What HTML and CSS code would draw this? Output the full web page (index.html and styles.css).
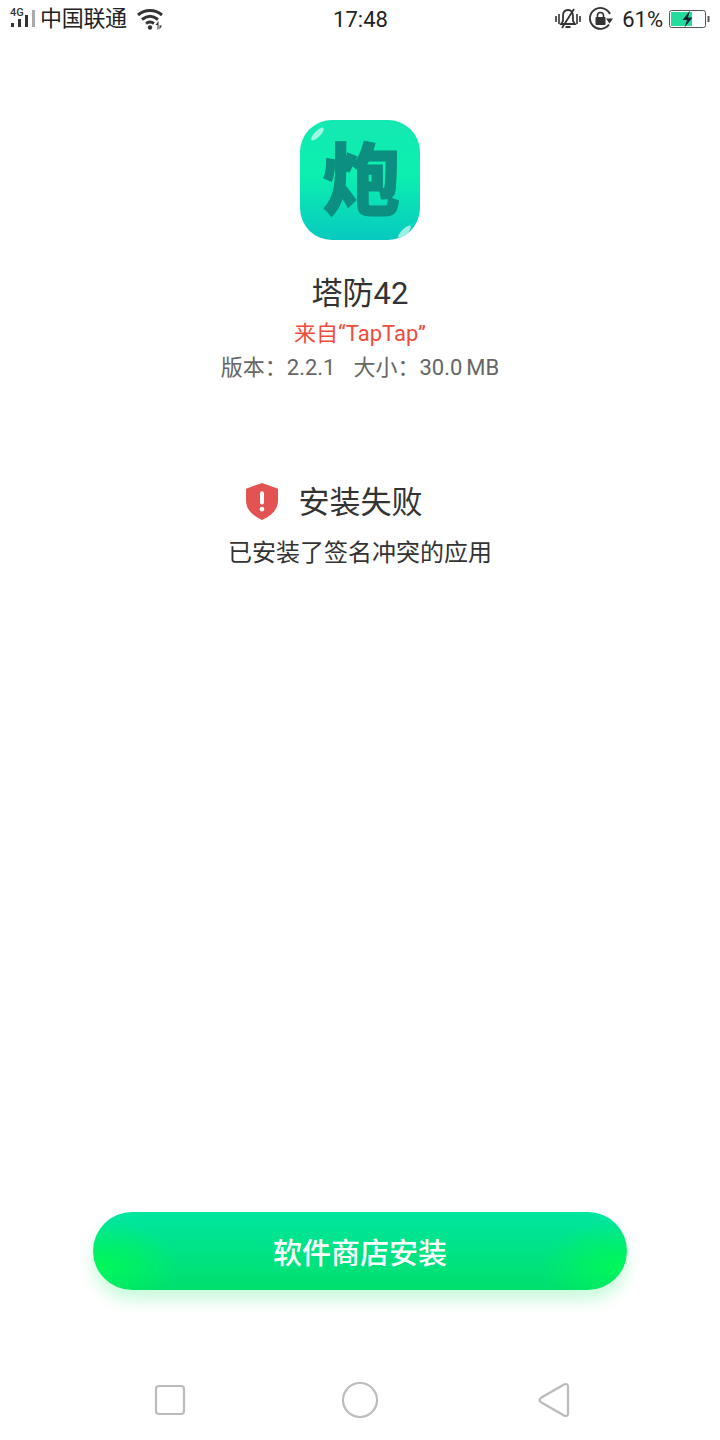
FILE: index.html
```html
<!doctype html>
<html lang="zh-CN">
<head>
  <meta charset="UTF-8">
  <title>安装失败</title>
  <link rel="stylesheet" href="styles.css">
</head>
<body>
  <div class="page">
    <header class="statusbar">
      <div class="status-left">
        <span class="signal">
          <span class="net">4G</span>
          <svg width="28" height="18" viewBox="0 0 28 18">
            <rect x="1" y="13" width="3" height="4" fill="#333"/>
            <rect x="8" y="9" width="3" height="8" fill="#333"/>
            <rect x="15" y="5" width="3" height="12" fill="#333"/>
            <rect x="22" y="0" width="3" height="17" fill="#aaa"/>
          </svg>
        </span>
        <span class="carrier">中国联通</span>
        <svg class="wifi" width="30" height="22" viewBox="0 0 30 22">
          <path d="M2 7C9 1 19 1 26 7" fill="none" stroke="#333" stroke-width="3"/>
          <path d="M6 11.500C11 7.500 17 7.500 22 11.500" fill="none" stroke="#333" stroke-width="3"/>
          <path d="M10 15.500C12.600 13.600 15.400 13.600 18 15.500" fill="none" stroke="#333" stroke-width="2.800"/>
          <circle cx="14" cy="19.500" r="2.200" fill="#333"/>
          <path d="M21.500 21.500v-4.500h-2l3-4v8.500zM23.500 13v4.500h2.500l-2.500 4z" fill="#333"/>
        </svg>
      </div>
      <div class="clock">17:48</div>
      <div class="status-right">
        <svg class="mute" width="26" height="24" viewBox="0 0 26 24">
          <path d="M13 3c-3.500 0-5 2.500-5 6v5l-2 3h14l-2-3V9c0-3.500-1.500-6-5-6z" fill="none" stroke="#333" stroke-width="1.800"/>
          <path d="M10.500 20h5M19 2L7 21" fill="none" stroke="#333" stroke-width="1.800"/>
          <path d="M1 9v6M4 7v10M22 7v10M25 9v6" fill="none" stroke="#333" stroke-width="1.600"/>
        </svg>
        <svg class="rotate" width="26" height="26" viewBox="0 0 26 26">
          <path d="M21 18.500A10.500 10.500 0 1 1 22 8" fill="none" stroke="#333" stroke-width="1.800"/>
          <path d="M18 12.500h7l-3.500 5z" fill="#333"/>
          <rect x="7.500" y="11" width="10" height="8" rx="1" fill="#333"/>
          <path d="M9.500 11V9.500a3 3 0 0 1 6 0V11" fill="none" stroke="#333" stroke-width="1.600"/>
        </svg>
        <span class="percent">61%</span>
        <svg class="battery" width="41" height="18" viewBox="0 0 41 18">
          <rect x=".5" y=".5" width="36" height="17" rx="2" fill="#fff" stroke="#555"/>
          <rect x="2" y="2" width="21" height="14" fill="#22dd9c"/>
          <path d="M21 0.500l-7.500 9.500h4.500l-2.500 7.500 8-10h-4.500z" fill="#123"/>
          <rect x="38.500" y="6" width="2" height="6" fill="#555"/>
        </svg>
      </div>
    </header>

    <main class="content">
      <div class="app-icon">
        <span class="app-glyph">炮</span>
        <span class="shine shine-top"></span>
        <span class="shine shine-bottom"></span>
      </div>
      <h1 class="app-name">塔防42</h1>
      <p class="app-source">来自“TapTap”</p>
      <p class="app-meta"><span>版本：2.2.1</span><span>大小：30.0 MB</span></p>

      <div class="result">
        <svg class="shield" width="34" height="37" viewBox="0 0 34 36" preserveAspectRatio="none">
          <path d="M17 0L33 5.500V17C33 26 26 32 17 36C8 32 1 26 1 17V5.500z" fill="#e25352"/>
          <rect x="15" y="8" width="4" height="13" rx="2" fill="#fff"/>
          <circle cx="17" cy="25.500" r="2.300" fill="#fff"/>
        </svg>
        <span class="result-title">安装失败</span>
      </div>
      <p class="result-reason">已安装了签名冲突的应用</p>
    </main>

    <div class="action">
      <button class="store-btn" type="button">软件商店安装</button>
    </div>

    <nav class="navbar">
      <svg width="32" height="32" viewBox="0 0 32 32">
        <rect x="2" y="2" width="28" height="28" rx="3" fill="none" stroke="#bbb" stroke-width="2.200"/>
      </svg>
      <svg class="nav-home" width="38" height="38" viewBox="0 0 38 38">
        <circle cx="19" cy="19" r="17" fill="none" stroke="#bbb" stroke-width="2.200"/>
      </svg>
      <svg width="34" height="36" viewBox="0 0 34 36">
        <path d="M2.500 18c0-1 .5-1.500 1.500-2.200L27 2.500c2-1 4-.5 4 2v27c0 2.500-2 3-4 2L4 20.200c-1-.7-1.500-1.200-1.500-2.200z" fill="none" stroke="#bbb" stroke-width="2.200"/>
      </svg>
    </nav>
  </div>
</body>
</html>
```
FILE: styles.css
```css
* { box-sizing: border-box; }
body { margin: 0; background: #fff; color: #333; font-family: Roboto, "Noto Sans CJK SC", sans-serif; }
h1, p { margin: 0; }

.page { display: flex; flex-direction: column; width: 720px; height: 1440px; overflow: hidden; }

/* status bar */
.statusbar { display: grid; grid-template-columns: 1fr auto 1fr; align-items: center; height: 38px; padding: 0 10px; flex: none; }
.status-left, .status-right { display: flex; align-items: center; }
.status-right { justify-content: flex-end; }
.signal { position: relative; display: block; width: 28px; height: 20px; }
.signal svg { display: block; position: absolute; left: 0; top: 1px; }
.net { position: absolute; left: 0; top: -1px; font-size: 11px; line-height: 10px; font-weight: 500; z-index: 1; }
.carrier { margin-left: 2px; font-size: 22px; letter-spacing: -.3px; line-height: 38px; color: #222; }
.wifi { margin-left: 9px; }
.clock { margin-left: 1px; font-size: 22px; color: #222; }
.mute { margin-right: 7px; }
.percent { margin: 0 6px 0 8px; font-size: 22px; color: #222; }

/* app info */
.content { flex: 1; display: flex; flex-direction: column; align-items: center; padding-top: 82px; }
.app-icon { position: relative; display: flex; align-items: center; justify-content: center; width: 120px; height: 120px; padding: 0 0 10px 3px; border-radius: 32px; background: linear-gradient(180deg, #14e8b2 0%, #0cf0b0 45%, #07c9bf 100%); overflow: hidden; }
.app-glyph { font-family: "Noto Sans CJK SC", sans-serif; font-size: 78px; line-height: 1; font-weight: 900; color: #0c8f80; -webkit-text-stroke: 1px #0c8f80; }
.shine { position: absolute; width: 17px; height: 6px; border-radius: 50%; background: #cdfbf0; opacity: .75; transform: rotate(-45deg); }
.shine-top { left: 9px; top: 11px; }
.shine-bottom { right: 7px; bottom: 5px; }
.app-name { margin-top: 32px; font-size: 31px; line-height: 44px; font-weight: 400; color: #333; }
.app-source { margin-top: 2px; font-size: 22px; line-height: 32px; color: #f04c3e; }
.app-meta { display: flex; gap: 18px; margin-top: 2px; font-size: 22px; word-spacing: -1.500px; line-height: 32px; color: #666; }

/* result */
.result { display: flex; align-items: center; gap: 20px; margin-top: 94px; margin-right: 53px; height: 50px; }
.shield { margin-top: -3px; }
.result-title { font-size: 31px; line-height: 50px; color: #333; }
.result-reason { margin-top: 7px; font-size: 24px; line-height: 36px; color: #333; }

/* bottom */
.action { flex: none; display: flex; justify-content: center; padding-bottom: 90px; }
.store-btn { width: 534px; height: 78px; border: 0; border-radius: 39px; color: #fff; font-family: inherit; font-size: 29px; font-weight: 500;
  background: radial-gradient(ellipse 75px 42px at 2% 68%, rgba(0,250,85,.9), rgba(0,250,85,0)), radial-gradient(ellipse 75px 42px at 98% 68%, rgba(0,250,85,.9), rgba(0,250,85,0)), linear-gradient(180deg, #00e6a0 0%, #00e06c 100%);
  box-shadow: 0 10px 16px rgba(0,230,90,.22); }
.navbar { flex: none; display: flex; justify-content: space-between; align-items: center; height: 60px; padding: 0 149px 21px 154px; }
.nav-home { margin-right: 3px; }
```
